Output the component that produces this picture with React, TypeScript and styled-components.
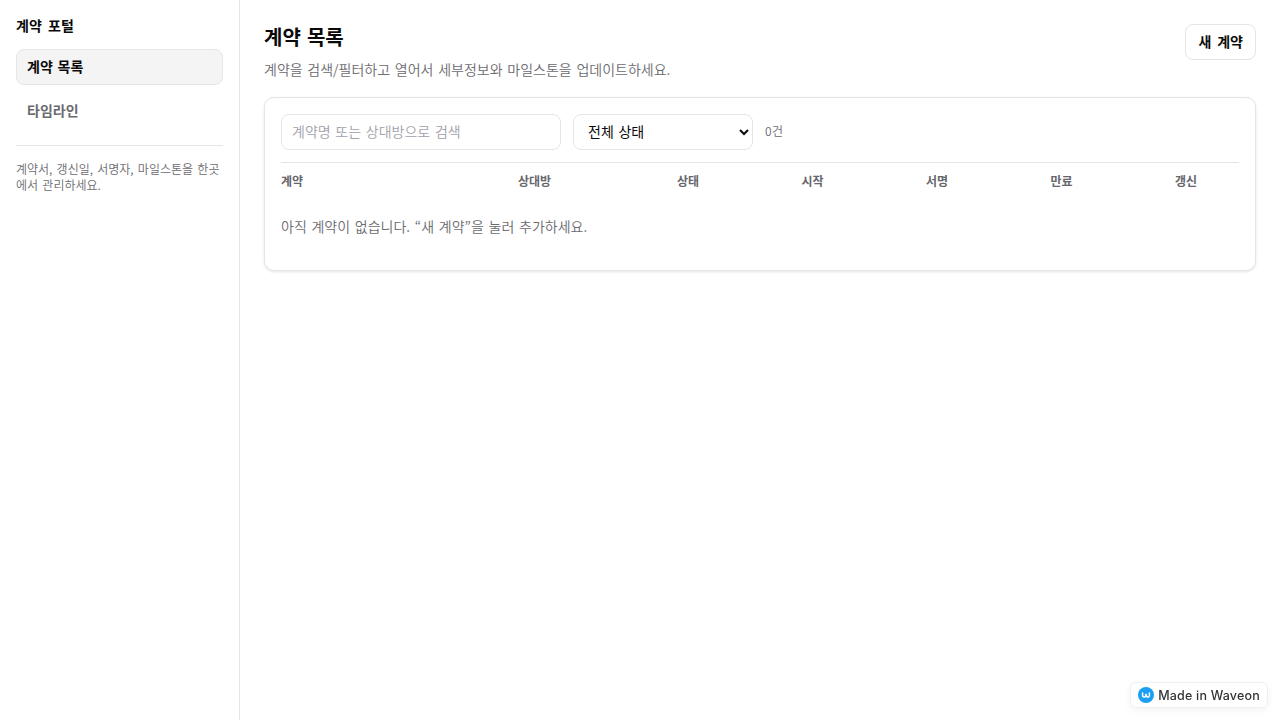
import styled, { createGlobalStyle } from "styled-components";

const GlobalStyle = createGlobalStyle`
    html, body {
        margin: 0;
        padding: 0;
        background: #ffffff;
    }
    * {
        box-sizing: border-box;
    }
    body {
        font-family: "Noto Sans CJK KR", sans-serif;
        word-spacing: 0.1em;
        color: #0a0a0a;
    }
`;

const Layout = styled.div`
    display: flex;
    width: 100%;
    height: 720px;
    overflow: hidden;
`;

const Sidebar = styled.aside`
    width: 240px;
    flex-shrink: 0;
    padding: 16px;
    border-right: 1px solid #e5e5e5;
    display: flex;
    flex-direction: column;
`;

const Brand = styled.div`
    font-size: 14px;
    line-height: 18px;
    font-weight: 700;
    word-spacing: 0.22em;
    margin-bottom: 15px;
`;

const NavItem = styled.div<{ $active?: boolean }>`
    height: 36px;
    padding: 0 10px 2px;
    display: flex;
    align-items: center;
    border-radius: 8px;
    font-size: 14px;
    font-weight: 700;
    border: 1px solid ${props => (props.$active ? "#e5e5e5" : "transparent")};
    background: ${props => (props.$active ? "#f4f4f4" : "transparent")};
    color: ${props => (props.$active ? "#0a0a0a" : "#6b6b70")};
    margin-bottom: 8px;
`;

const SideDivider = styled.hr`
    width: 100%;
    height: 1px;
    margin: 8px 0 0;
    border: none;
    background: #e5e5e5;
`;

const SideNote = styled.p`
    margin: 15px 0 0;
    font-size: 12px;
    font-weight: 350;
    line-height: 16px;
    color: #6b6b70;
`;

const Main = styled.main`
    flex: 1;
    padding: 24px;
    display: flex;
    flex-direction: column;
`;

const Header = styled.div`
    display: flex;
    justify-content: space-between;
    align-items: flex-start;
    margin-bottom: 17px;
`;

const Title = styled.h1`
    margin: 0 0 8px;
    font-size: 20px;
    line-height: 26px;
    font-weight: 700;
`;

const Subtitle = styled.p`
    margin: 0;
    font-size: 14px;
    font-weight: 350;
    line-height: 22px;
    color: #6b6b70;
`;

const NewButton = styled.button`
    height: 36px;
    padding: 0 12px 3px;
    border: 1px solid #e5e5e5;
    border-radius: 8px;
    background: #ffffff;
    color: #0a0a0a;
    font-family: inherit;
    font-size: 14px;
    font-weight: 700;
    word-spacing: 0.2em;
`;

const Card = styled.section`
    padding: 16px;
    border: 1px solid #e5e5e5;
    border-radius: 10px;
    background: #ffffff;
    box-shadow: 0 1px 3px rgba(0, 0, 0, 0.1);
`;

const Filters = styled.div`
    display: flex;
    align-items: center;
    gap: 12px;
    padding-bottom: 12px;
    border-bottom: 1px solid #e5e5e5;
`;

const SearchInput = styled.input`
    width: 280px;
    height: 36px;
    padding: 0 10px 2px;
    border: 1px solid #e5e5e5;
    border-radius: 8px;
    background: #ffffff;
    font-family: inherit;
    font-size: 14px;
    font-weight: 350;
    word-spacing: inherit;
    &::placeholder {
        color: #a1a1aa;
    }
`;

const StatusSelect = styled.select`
    width: 180px;
    height: 36px;
    padding: 0 10px 2px;
    border: 1px solid #e5e5e5;
    border-radius: 8px;
    background: #ffffff;
    color: #0a0a0a;
    font-family: inherit;
    font-size: 14px;
    font-weight: 400;
    word-spacing: 0.11em;
`;

const Count = styled.span`
    padding-bottom: 4px;
    font-size: 12px;
    font-weight: 350;
    letter-spacing: 0.5px;
    color: #6b6b70;
`;

const TableHead = styled.div`
    display: grid;
    grid-template-columns: 237px 159px 124.5px 124.5px 124.5px 124.5px 1fr;
    height: 36px;
    padding-bottom: 2px;
    align-items: center;
`;

const HeadCell = styled.span`
    font-size: 12px;
    font-weight: 700;
    color: #66666c;
`;

const EmptyText = styled.p`
    margin: 0;
    padding: 16px 0 17px;
    font-size: 14px;
    font-weight: 350;
    line-height: 22px;
    color: #6b6b70;
`;

const Badge = styled.div`
    position: fixed;
    right: 12px;
    bottom: 12px;
    height: 26px;
    padding: 0 7px;
    display: flex;
    align-items: center;
    gap: 4px;
    border: 1px solid #f0f0f0;
    border-radius: 6px;
    background: #ffffff;
    box-shadow: 0 2px 8px rgba(0, 0, 0, 0.05);
    font-family: "Inter", "Noto Sans", sans-serif;
    font-size: 12.5px;
    font-weight: 500;
    letter-spacing: 0.2px;
    word-spacing: 0;
    color: #333338;
`;

const COLUMNS = ["계약", "상대방", "상태", "시작", "서명", "만료", "갱신"];

const App = () => {
    return (
        <Layout>
            <GlobalStyle />
            <Sidebar>
                <Brand>계약 포털</Brand>
                <NavItem $active>계약 목록</NavItem>
                <NavItem>타임라인</NavItem>
                <SideDivider />
                <SideNote>계약서, 갱신일, 서명자, 마일스톤을 한곳에서 관리하세요.</SideNote>
            </Sidebar>
            <Main>
                <Header>
                    <div>
                        <Title>계약 목록</Title>
                        <Subtitle>계약을 검색/필터하고 열어서 세부정보와 마일스톤을 업데이트하세요.</Subtitle>
                    </div>
                    <NewButton>새 계약</NewButton>
                </Header>
                <Card>
                    <Filters>
                        <SearchInput placeholder="계약명 또는 상대방으로 검색" />
                        <StatusSelect>
                            <option>전체 상태</option>
                        </StatusSelect>
                        <Count>0건</Count>
                    </Filters>
                    <TableHead>
                        {COLUMNS.map((column) => (
                            <HeadCell key={column}>{column}</HeadCell>
                        ))}
                    </TableHead>
                    <EmptyText>아직 계약이 없습니다. “새 계약”을 눌러 추가하세요.</EmptyText>
                </Card>
            </Main>
            <Badge>
                <svg width="16" height="16" viewBox="0 0 16 16">
                    <circle cx="8" cy="8" r="8" fill="#1a9ff2" />
                    <path d="M4.6 6 V8.6 C4.6 10.6 7.2 10.6 7.6 8.8 L8 7 L8.4 8.8 C8.8 10.6 11.4 10.6 11.4 8.6 V6" fill="none" stroke="#ffffff" strokeWidth="1.5" strokeLinecap="round" />
                </svg>
                Made in Waveon
            </Badge>
        </Layout>
    );
};

export default App;
